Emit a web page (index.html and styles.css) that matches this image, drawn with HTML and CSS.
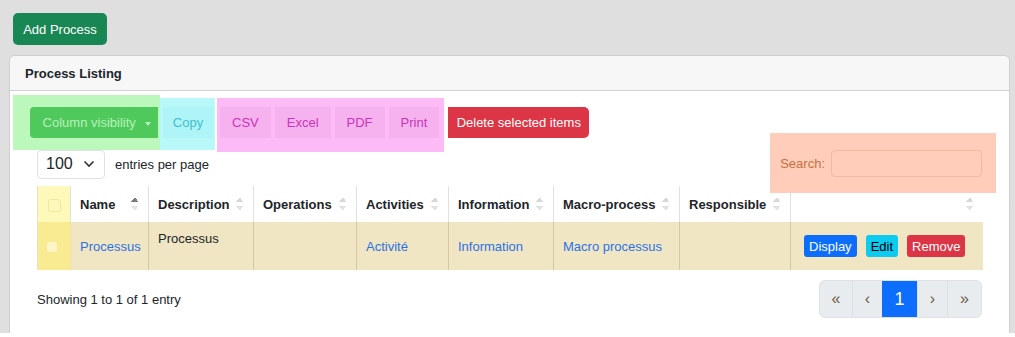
FILE: index.html
```html
<!DOCTYPE html>
<html lang="en">
<head>
  <meta charset="UTF-8" />
  <meta name="viewport" content="width=device-width, initial-scale=1.0" />
  <title>Process Listing</title>
  <link rel="stylesheet" href="styles.css">
</head>
<body>
  <div class="page">
    <button class="btn btn-add">Add Process</button>

    <div class="card">
      <div class="card-header">Process Listing</div>
      <div class="card-body">

        <div class="toolbar">
          <div class="zone zone-green">
            <button class="btn btn-colvis">Column visibility <span class="caret"></span></button>
          </div>
          <div class="zone zone-cyan">
            <button class="btn btn-copy">Copy</button>
          </div>
          <div class="zone zone-pink">
            <button class="btn btn-export">CSV</button>
            <button class="btn btn-export">Excel</button>
            <button class="btn btn-export">PDF</button>
            <button class="btn btn-export">Print</button>
          </div>
          <button class="btn btn-delete">Delete selected items</button>
        </div>

        <div class="table-top">
          <div class="length">
            <div class="select">
              <span>100</span>
              <svg width="12" height="8" viewBox="0 0 12 8"><path d="M1.5 1.5 L6 6 L10.5 1.5" fill="none" stroke="#333" stroke-width="1.6"/></svg>
            </div>
            <span class="length-label">entries per page</span>
          </div>
          <div class="search">
            <label>Search:</label>
            <input type="text" />
          </div>
        </div>

        <table class="listing">
          <colgroup>
            <col style="width:33px"><col style="width:78px"><col style="width:105px"><col style="width:103px">
            <col style="width:92px"><col style="width:105px"><col style="width:126px"><col style="width:111px"><col style="width:192px">
          </colgroup>
          <thead>
            <tr>
              <th class="check-col"><span class="check"></span></th>
              <th class="sorting sorted">Name</th>
              <th class="sorting">Description</th>
              <th class="sorting">Operations</th>
              <th class="sorting">Activities</th>
              <th class="sorting">Information</th>
              <th class="sorting">Macro-process</th>
              <th class="sorting">Responsible</th>
              <th class="sorting"></th>
            </tr>
          </thead>
          <tbody>
            <tr>
              <td class="check-col"><span class="check"></span></td>
              <td><a href="#">Processus</a></td>
              <td class="desc">Processus</td>
              <td></td>
              <td><a href="#">Activité</a></td>
              <td><a href="#">Information</a></td>
              <td><a href="#">Macro processus</a></td>
              <td></td>
              <td>
                <div class="actions">
                  <button class="btn-sm btn-display">Display</button>
                  <button class="btn-sm btn-edit">Edit</button>
                  <button class="btn-sm btn-remove">Remove</button>
                </div>
              </td>
            </tr>
          </tbody>
        </table>

        <div class="table-bottom">
          <div class="info">Showing 1 to 1 of 1 entry</div>
          <ul class="pagination">
            <li>«</li>
            <li>‹</li>
            <li class="active">1</li>
            <li>›</li>
            <li>»</li>
          </ul>
        </div>

      </div>
    </div>
  </div>
</body>
</html>
```

FILE: styles.css
```css
body {
  margin: 0;
  background: white;
  font-family: "Liberation Sans", Arial, sans-serif;
  font-size: 13px;
  color: #212529;
}

.page {
  background: #dfdfdf;
  height: 333px;
  overflow: hidden;
  padding: 13px 5px 0 9px;
  box-sizing: border-box;
}

.btn {
  font-family: inherit;
  font-size: 13px;
  border: none;
  cursor: pointer;
}

.btn-add {
  margin-left: 4px;
  width: 94px;
  height: 32px;
  background: #198754;
  color: white;
  border-radius: 5px;
}

.card {
  margin-top: 10px;
  background: white;
  border: 1px solid #cfcfcf;
  border-radius: 6px;
  height: 400px;
}

.card-header {
  height: 34px;
  line-height: 35px;
  padding-left: 15px;
  background: #f7f7f7;
  border-bottom: 1px solid #d2d2d2;
  border-radius: 6px 6px 0 0;
  font-weight: bold;
}

.card-body {
  padding: 0 27px;
}

.toolbar {
  display: flex;
  align-items: flex-start;
  margin-top: 4px;
  margin-left: -24px;
}

.zone {
  display: flex;
  gap: 4px;
}

.zone-green {
  background: #bcf8bc;
  padding: 12px 2px 12px 17px;
}

.zone-cyan {
  background: #b8f8f9;
  margin-top: 3px;
  padding: 9px 2px 12px 3px;
}

.zone-pink {
  background: #fcbaf6;
  margin-top: 3px;
  margin-left: 2px;
  padding: 9px 5px 14px 3px;
}

.btn-colvis {
  width: 128px;
  height: 31px;
  padding-left: 12px;
  background: #50c95c;
  color: #b6f2bb;
  border-radius: 4px 0 0 4px;
}

.caret {
  display: inline-block;
  margin-left: 6px;
  vertical-align: middle;
  border-top: 4px solid #b6f2bb;
  border-left: 3px solid transparent;
  border-right: 3px solid transparent;
}

.btn-copy {
  width: 50px;
  height: 31px;
  background: #aff4f6;
  color: #3dbfd0;
}

.btn-export {
  height: 31px;
  padding: 0 12px;
  background: #f6b2ee;
  color: #c935b8;
}

.btn-delete {
  margin-top: 12px;
  margin-left: 4px;
  width: 141px;
  height: 31px;
  background: #dc3545;
  color: white;
  border-radius: 0 5px 5px 0;
}

.table-top {
  display: flex;
  justify-content: space-between;
  align-items: center;
  margin-top: -19px;
  height: 60px;
}

.length {
  display: flex;
  align-items: center;
  gap: 10px;
  padding-top: 2px;
}

.select {
  width: 68px;
  height: 29px;
  box-sizing: border-box;
  border: 1px solid #dee2e6;
  border-radius: 4px;
  background: white;
  display: flex;
  align-items: center;
  justify-content: space-between;
  padding: 0 9px 0 8px;
  font-size: 16px;
}

.search {
  display: flex;
  align-items: center;
  justify-content: flex-end;
  gap: 6px;
  width: 226px;
  box-sizing: border-box;
  height: 60px;
  background: #ffcdb9;
  margin-right: -14px;
  padding: 0 14px;
  color: #c7703f;
}

.search input {
  width: 151px;
  height: 27px;
  box-sizing: border-box;
  border: 1px solid #efb9a2;
  border-radius: 4px;
  background: transparent;
}

.listing {
  width: 945px;
  table-layout: fixed;
  border-collapse: collapse;
  margin-top: -7px;
}

.listing thead tr {
  height: 36px;
}

.listing tbody tr {
  height: 48px;
}

.listing th {
  padding: 0 9px;
  text-align: left;
  font-weight: bold;
  border-left: 1px solid #dee2e6;
  position: relative;
}

.listing td {
  padding: 0 9px;
  background: #f0e6c4;
  border-left: 1px solid #d6c9a1;
}

.listing th:first-child,
.listing td:first-child {
  border-left: 1px solid #e8e2c0;
}

.sorting::after {
  content: "";
  position: absolute;
  right: 10px;
  top: 11px;
  width: 7px;
  height: 14px;
  background:
    linear-gradient(to bottom right, transparent 50%, #d8d8d8 50%) left 0 / 4px 5px no-repeat,
    linear-gradient(to bottom left, transparent 50%, #d8d8d8 50%) right 0 / 3px 5px no-repeat,
    linear-gradient(to top right, transparent 50%, #e2e2e2 50%) left 9px / 4px 5px no-repeat,
    linear-gradient(to top left, transparent 50%, #e2e2e2 50%) right 9px / 3px 5px no-repeat;
}

.sorted::after {
  background:
    linear-gradient(to bottom right, transparent 50%, #7a7a7a 50%) left 0 / 4px 5px no-repeat,
    linear-gradient(to bottom left, transparent 50%, #7a7a7a 50%) right 0 / 3px 5px no-repeat,
    linear-gradient(to top right, transparent 50%, #e2e2e2 50%) left 9px / 4px 5px no-repeat,
    linear-gradient(to top left, transparent 50%, #e2e2e2 50%) right 9px / 3px 5px no-repeat;
}

.listing th.check-col {
  background: #fff8bb;
  padding: 0;
  text-align: center;
}

.listing td.check-col {
  background: #f9eb91;
  padding: 0;
  text-align: center;
  border-right: 1px solid #f3e39a;
}

.check {
  display: inline-block;
  width: 10px;
  height: 10px;
  border-radius: 3px;
  vertical-align: middle;
}

th .check {
  width: 11px;
  height: 11px;
  border: 1px solid #f3e7a0;
}

td .check {
  background: #fdf6c8;
  margin-right: 5px;
}

.listing a {
  color: #2b72e6;
  text-decoration: none;
}

.listing td.desc {
  vertical-align: top;
  padding-top: 9px;
}

.actions {
  display: flex;
  gap: 9px;
  padding-left: 4px;
}

.btn-sm {
  font-family: inherit;
  font-size: 13px;
  height: 22px;
  border: none;
  border-radius: 3px;
  padding: 0 5px;
  white-space: nowrap;
}

.btn-display {
  background: #0d6efd;
  color: white;
}

.btn-edit {
  background: #0dcaf0;
  color: black;
}

.btn-remove {
  background: #dc3545;
  color: white;
}

.table-bottom {
  display: flex;
  justify-content: space-between;
  align-items: center;
  margin-top: 10px;
}

.pagination {
  display: flex;
  list-style: none;
  margin: 0;
  padding: 0;
  border: 1px solid #dee2e6;
  border-radius: 6px;
  overflow: hidden;
  background: #e9ecef;
}

.pagination li {
  width: 29px;
  height: 36px;
  line-height: 36px;
  text-align: center;
  font-size: 16px;
  color: #6b5d4a;
  border-left: 1px solid #dee2e6;
}

.pagination li:first-child {
  border-left: none;
  width: 32px;
}

.pagination li.active {
  width: 35px;
  background: #0d6efd;
  color: white;
  font-size: 18px;
  border-left: none;
}

.pagination li:last-child {
  width: 33px;
}
```
